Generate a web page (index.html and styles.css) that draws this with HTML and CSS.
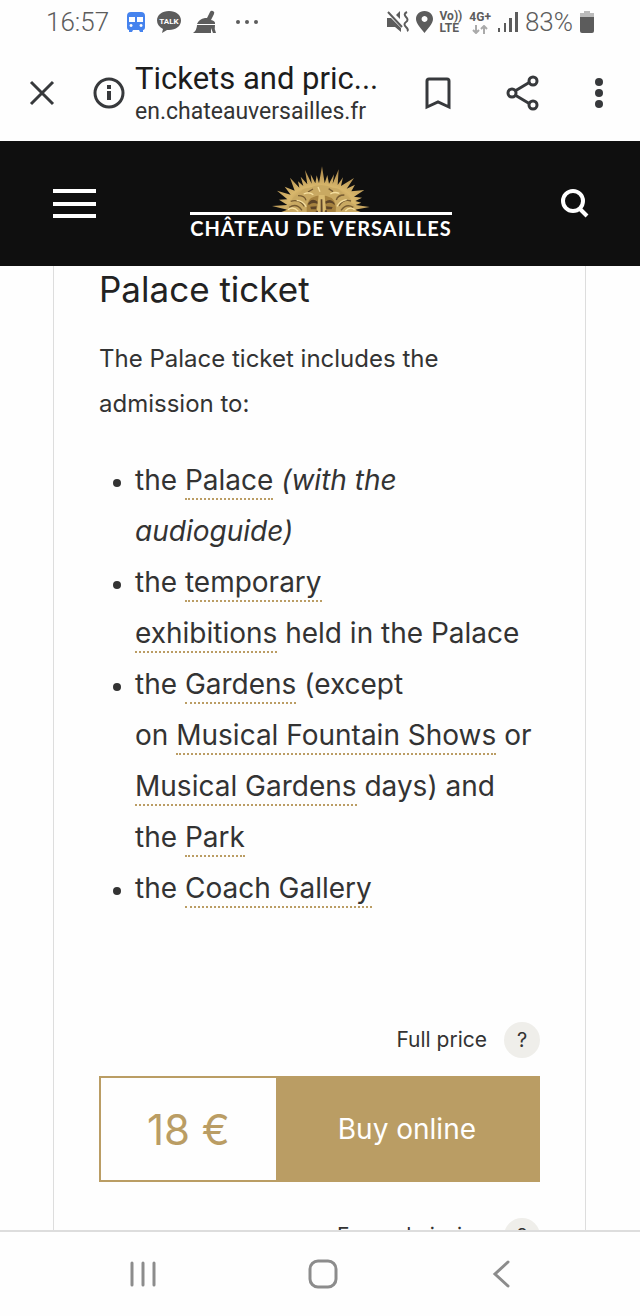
FILE: index.html
```html
<!DOCTYPE html>
<html lang="en">
<head>
    <meta charset="UTF-8">
    <meta name="viewport" content="width=device-width, initial-scale=1.0">
    <title>Tickets and prices</title>
    <link rel="stylesheet" href="styles.css">
</head>
<body>
    <div class="status-bar">
        <div class="status-left">
            <span class="status-text">16:57</span>
            <svg class="train" width="18" height="22" viewBox="0 0 18 22">
                <path fill="#4583ee" fill-rule="evenodd" d="M4 1h10q4 0 4 4v11q0 3-2 3v2h-3l-1-2H6l-1 2H2v-2q-2 0-2-3V5q0-4 4-4zM2 6v5h6V6zM10 6v5h6V6zM4 13a1.500 1.500 0 1 0 .1 0zM14 13a1.500 1.500 0 1 0 .1 0z"/>
            </svg>
            <svg width="24" height="22" viewBox="0 0 24 22">
                <path fill="#5c5c5c" d="M12 0c7 0 12 4 12 9.500S19 19 12 19h-2l-5 3 1-4c-4-2-6-5-6-8.500C0 4 5 0 12 0z"/>
                <text x="12" y="13" class="talk">TALK</text>
            </svg>
            <svg width="24" height="24" viewBox="0 0 24 24">
                <path fill="#5c5c5c" d="M17 2q1-2 3-1t1 3l-3 6q4 1 4 3v1H4q2-5 8-6h2zM4 15h18q-1 4 1 8h-3l-2-5v5H0q4-3 4-8z"/>
            </svg>
            <svg width="24" height="6" viewBox="0 0 24 6" fill="#5c5c5c">
                <circle cx="3" cy="3" r="2"/><circle cx="12" cy="3" r="2"/><circle cx="21" cy="3" r="2"/>
            </svg>
        </div>
        <div class="status-right">
            <svg width="22" height="22" viewBox="0 0 22 22">
                <path fill="#5c5c5c" d="M0 7h4l10 10v4l-6-5H0zM9 4l4-4v8z"/>
                <path fill="none" stroke="#5c5c5c" stroke-width="2" d="M1 1l14 15M20 1q-4 2-1 5t0 5 0 5 1 4"/>
            </svg>
            <svg width="17" height="22" viewBox="0 0 17 22">
                <path fill="#5c5c5c" fill-rule="evenodd" d="M8.500 0C14 0 17 4 17 8c0 5-5 9-8.500 14C5 17 0 13 0 8c0-4 3-8 8.500-8zM8.500 5a3 3 0 1 0 .1 0z"/>
            </svg>
            <span class="network">Vo))<br>LTE</span>
            <span class="network">4G+
                <svg width="16" height="9" viewBox="0 0 16 9" fill="none" stroke="#aaa" stroke-width="2"><path d="M4 0v8M1 5l3 3 3-3M12 9V1M9 4l3-3 3 3"/></svg>
            </span>
            <svg width="20" height="20" viewBox="0 0 20 20" fill="#5c5c5c">
                <path d="M0 16h2v4H0zM6 11h2v9H6zM11 6h3v14h-3zM17 0h3v20h-3z"/>
            </svg>
            <span class="status-text">83%</span>
            <svg width="14" height="22" viewBox="0 0 14 22">
                <path fill="#bbb" d="M4 0h6v2h4v4H0V2h4z"/>
                <path fill="#5c5c5c" d="M0 6h14v14q0 2-2 2H2q-2 0-2-2z"/>
            </svg>
        </div>
    </div>

    <div class="browser-bar">
        <button class="icon-button" aria-label="Close">
            <svg width="26" height="26" viewBox="0 0 26 26"><path d="M2 2l22 22M24 2L2 24"/></svg>
        </button>
        <button class="icon-button info" aria-label="Site information">
            <svg width="32" height="32" viewBox="0 0 32 32"><circle cx="16" cy="16" r="14"/><path class="dot" d="M14 8h4v4h-4zM14 14h4v9h-4z"/></svg>
        </button>
        <div class="page-info">
            <div class="page-title">Tickets and pric...</div>
            <div class="page-url">en.chateauversailles.fr</div>
        </div>
        <div class="browser-actions">
            <button class="icon-button" aria-label="Bookmark">
                <svg width="26" height="34" viewBox="0 0 26 34"><path d="M2 31V5q0-2 2-2h18q2 0 2 2v26l-11-5z"/></svg>
            </button>
            <button class="icon-button" aria-label="Share">
                <svg width="34" height="38" viewBox="0 0 34 38"><path d="M9 17l15-9M9 21l15 9"/><circle cx="6" cy="19" r="4"/><circle cx="27" cy="7" r="4"/><circle cx="27" cy="31" r="4"/></svg>
            </button>
            <button class="icon-button" aria-label="More options">
                <svg width="8" height="30" viewBox="0 0 8 30" class="more"><circle cx="4" cy="4" r="4"/><circle cx="4" cy="15" r="4"/><circle cx="4" cy="26" r="4"/></svg>
            </button>
        </div>
    </div>

    <header class="site-header">
        <button class="icon-button" aria-label="Menu">
            <svg width="43" height="30" viewBox="0 0 43 30"><path d="M0 2h43M0 15h43M0 27h43"/></svg>
        </button>
        <a href="#" class="logo">
            <svg width="98" height="46" viewBox="302 50 294 138" aria-hidden="true">
                <defs>
                    <radialGradient id="gold" cx="50%" cy="75%" r="65%">
                        <stop offset="0" stop-color="#8f6c36"/>
                        <stop offset="0.500" stop-color="#d8b76c"/>
                        <stop offset="1" stop-color="#af8b4c"/>
                    </radialGradient>
                </defs>
                <path fill="url(#gold)" d="M330 188L348 181 302 170 348 167 323 151 348 150 317 124 358 136 340 112 370 124 356 85 384 115 380 96 396 110 388 82 408 105 401 62 421 103 418 75 432 102 436 78 443 102 452 51 460 102 468 77 473 103 488 75 484 103 502 60 499 107 515 84 509 110 548 86 526 118 551 106 540 126 579 122 548 142 572 145 552 155 570 160 553 167 595 173 550 181 568 188z"/>
                <path fill="#c9a962" d="M347 188q-5-22 14-28 0-23 24-24 5-22 29-20 35-18 70 0 24-2 31 20 24 3 25 25 17 6 14 27z"/>
                <path fill="none" stroke="#765b31" stroke-width="4" d="M354 174q21-14 38 9M358 156q25-8 41 15M380 139q21 0 24 14M546 174q-21-13-37 9M539 155q-23-7-36 15M519 137q-20 0-24 15M410 128l15-9M485 127l-13-9"/>
                <path fill="none" stroke="#f5dfa0" stroke-width="4" d="M350 181q16-12 31 5M376 153q18 0 29 20M397 134q17-8 29 2M550 181q-16-11-28 4M526 151q-18 2-29 20M504 132q-16-6-27 2M440 113l6 14"/>
                <path fill="#a6823f" d="M406 188q-2-30 13-42 31-17 62 0 16 15 12 42z"/>
                <path fill="#5d4427" d="M410 163q11-20 29-6v7q-14-8-27 3zM461 157q18-12 29 6v4q-12-12-27-3zM417 172l19-1-2 9h-15zM464 171l20 2-3 7h-16z"/>
                <path fill="#d9ba70" d="M442 137h18l4 51h-28z"/>
                <path fill="#604629" d="M448 150h5l1 38h-6zM434 184h6v4h-7zM461 183h6v5h-7z"/>
            </svg>
            <span class="logo-text">CHÂTEAU DE VERSAILLES</span>
        </a>
        <button class="icon-button search" aria-label="Search">
            <svg width="28" height="30" viewBox="0 0 28 30"><circle cx="12" cy="12" r="10"/><path d="M18 19l8 8"/></svg>
        </button>
    </header>

    <main>
        <section class="ticket">
            <h1>Palace ticket</h1>
            <p>The Palace ticket includes the admission to:</p>
            <ul>
                <li>the <a href="#">Palace</a> <em>(with the audioguide)</em></li>
                <li>the <a href="#">temporary exhibitions</a>&nbsp;held&nbsp;in the Palace</li>
                <li>the <a href="#">Gardens</a> (except on&nbsp;<a href="#">Musical Fountain Shows</a> or <a href="#">Musical Gardens</a> days) and the&nbsp;<a href="#">Park</a></li>
                <li>the <a href="#">Coach Gallery</a></li>
            </ul>

            <div class="price-label">Full price <button class="help" aria-label="About full price">?</button></div>
            <div class="offer">
                <div class="price">18 €</div>
                <button class="buy">Buy online</button>
            </div>

            <div class="price-label">Free admission <button class="help" aria-label="About free admission">?</button></div>
        </section>
    </main>

    <nav class="phone-nav">
        <button class="icon-button" aria-label="Recent apps">
            <svg width="28" height="28" viewBox="0 0 28 28"><path d="M3 3v22M14 3v22M25 3v22"/></svg>
        </button>
        <button class="icon-button" aria-label="Home">
            <svg width="30" height="30" viewBox="0 0 30 30"><rect x="2" y="2" width="26" height="26" rx="8"/></svg>
        </button>
        <button class="icon-button" aria-label="Back">
            <svg width="28" height="28" viewBox="0 0 28 28"><path d="M20 2L7 14l13 12"/></svg>
        </button>
    </nav>
</body>
</html>
```
FILE: styles.css
```css
* {
    box-sizing: border-box;
}
body {
    margin: 0;
    height: 100vh;
    display: flex;
    flex-direction: column;
    overflow: hidden;
    background: #fefefe;
    color: #333;
    font-family: Inter, "Liberation Sans", sans-serif;
    font-weight: 400;
}
button {
    font: inherit;
    color: inherit;
    border: none;
    padding: 0;
    background: none;
    cursor: pointer;
}
svg {
    display: block;
    flex-shrink: 0;
}
.icon-button svg {
    fill: none;
    stroke: #37393c;
    stroke-width: 3;
}

/* Phone status bar */
.status-bar {
    height: 44px;
    flex-shrink: 0;
    padding: 0 46px;
    display: flex;
    justify-content: space-between;
    align-items: center;
    font-family: Roboto, sans-serif;
    color: #5c5c5c;
}
.status-left, .status-right {
    display: flex;
    align-items: center;
}
.status-left {
    gap: 12px;
}
.status-left .train {
    margin-left: 6px;
}
.status-left svg:last-child {
    margin-left: 6px;
}
.status-right {
    gap: 7px;
}
.status-text {
    font-size: 26px;
    font-weight: 300;
}
.talk {
    fill: #fff;
    font-size: 8px;
    font-weight: 700;
    text-anchor: middle;
}
.network {
    font-size: 12px;
    line-height: 12px;
    font-weight: 700;
}
.network svg {
    margin: 2px auto 0;
}

/* Browser bar */
.browser-bar {
    height: 97px;
    flex-shrink: 0;
    padding: 0 37px 0 29px;
    display: flex;
    align-items: center;
    font-family: Roboto, sans-serif;
}
.info {
    margin: 0 10px 0 38px;
}
.info .dot {
    fill: #37393c;
    stroke: none;
}
.page-info {
    flex: 1;
    white-space: nowrap;
}
.page-title {
    font-size: 31px;
    line-height: 38px;
    color: #1c1c1c;
}
.page-url {
    font-size: 23px;
    line-height: 28px;
}
.browser-actions {
    display: flex;
    align-items: center;
    gap: 55px;
}
.more circle {
    fill: #37393c;
    stroke: none;
}

/* Site header */
.site-header {
    height: 125px;
    flex-shrink: 0;
    padding: 0 51px 0 53px;
    display: grid;
    grid-template-columns: 1fr auto 1fr;
    align-items: center;
    background: #0f0f0f;
}
.site-header .icon-button {
    justify-self: start;
}
.site-header .search {
    justify-self: end;
}
.site-header .icon-button svg {
    stroke: #fff;
    stroke-width: 4;
}
.logo {
    display: flex;
    flex-direction: column;
    align-items: center;
    color: #fff;
    text-decoration: none;
}
.logo-text {
    border-top: 3px solid #fff;
    font-family: Lato, sans-serif;
    font-size: 20px;
    line-height: 27px;
    font-weight: 700;
    letter-spacing: 1px;
}

/* Ticket */
main {
    flex: 1;
    min-height: 0;
    overflow: hidden;
    padding: 0 54px 0 53px;
}
.ticket {
    padding: 0 45px;
    border: solid #ddd;
    border-width: 0 1px;
}
h1 {
    margin: 0 0 23px;
    font-size: 35px;
    line-height: 47px;
    font-weight: 400;
    color: #222;
}
p {
    margin: 0 0 29px;
    font-size: 24px;
    line-height: 45px;
}
ul {
    margin: 0 0 108px;
    padding-left: 36px;
    font-size: 28px;
    line-height: 51px;
}
li::marker {
    font-size: 24px;
}
li a {
    color: inherit;
    text-decoration: none;
    border-bottom: 2px dotted #bb9d64;
    padding-bottom: 1px;
}
.price-label {
    display: flex;
    justify-content: flex-end;
    align-items: center;
    gap: 17px;
    font-size: 21px;
    line-height: 36px;
}
.help {
    width: 36px;
    height: 36px;
    border-radius: 50%;
    background: #efeeea;
    font-size: 20px;
}
.offer {
    display: flex;
    margin: 18px 0 36px;
    height: 106px;
    border: 2px solid #ba9d64;
}
.price {
    flex: 2;
    display: flex;
    justify-content: center;
    align-items: center;
    font-size: 42px;
    color: #ba9d64;
}
.buy {
    flex: 3;
    background: #ba9d64;
    color: #fff;
    font-size: 28px;
}

/* Phone navigation */
.phone-nav {
    flex-shrink: 0;
    height: 86px;
    border-top: 2px solid #ddd;
    padding: 0 124px 0 129px;
    display: flex;
    justify-content: space-between;
    align-items: center;
}
.phone-nav svg {
    stroke: #8c8c8c;
    stroke-linecap: round;
}
```
